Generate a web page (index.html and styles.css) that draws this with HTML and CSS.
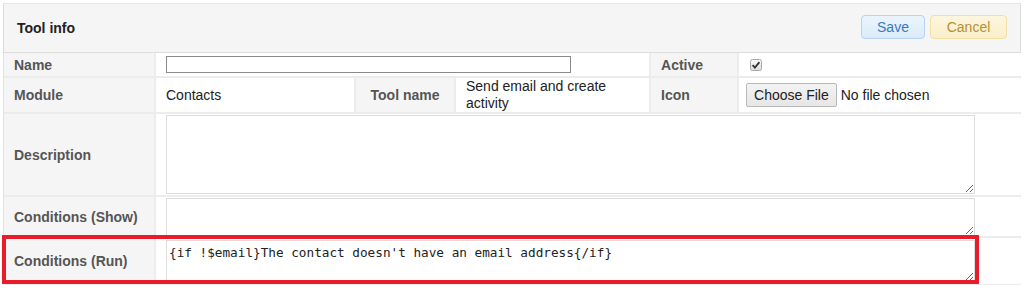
FILE: index.html
```html
<!DOCTYPE html>
<html>
<head>
<meta charset="utf-8">
<link rel="stylesheet" href="styles.css">
</head>
<body>
<div class="panel">
  <div class="panel-head">
    <div class="title">Tool info</div>
    <div class="actions">
      <button class="btn btn-save">Save</button>
      <button class="btn btn-cancel">Cancel</button>
    </div>
  </div>
  <table class="form">
    <colgroup>
      <col class="c1"><col class="c2"><col class="c3"><col class="c4"><col class="c5"><col class="c6">
    </colgroup>
    <tr class="r-name">
      <td class="lbl">Name</td>
      <td class="val" colspan="3"><input class="name-input" type="text"></td>
      <td class="lbl">Active</td>
      <td class="val">
        <svg class="chk" width="12" height="12" viewBox="0 0 12 12">
          <defs><linearGradient id="g" x1="0" y1="0" x2="0" y2="1"><stop offset="0" stop-color="#fbfbfb"/><stop offset="1" stop-color="#dcdcdc"/></linearGradient></defs>
          <rect x="0.5" y="0.5" width="11" height="11" rx="2" fill="url(#g)" stroke="#a8a8a8"/>
          <path d="M2.6 6.2 L4.9 8.6 L9.4 3.2" fill="none" stroke="#333" stroke-width="1.8"/>
        </svg>
      </td>
    </tr>
    <tr class="r-module">
      <td class="lbl">Module</td>
      <td class="val">Contacts</td>
      <td class="lbl lbl-c">Tool name</td>
      <td class="val val-wrap">Send email and create activity</td>
      <td class="lbl">Icon</td>
      <td class="val"><span class="file-btn">Choose File</span><span class="file-txt">No file chosen</span></td>
    </tr>
    <tr class="r-desc">
      <td class="lbl">Description</td>
      <td class="val ta-cell" colspan="5"><textarea class="ta ta-desc"></textarea></td>
    </tr>
    <tr class="r-show">
      <td class="lbl">Conditions (Show)</td>
      <td class="val ta-cell" colspan="5"><textarea class="ta ta-show"></textarea></td>
    </tr>
    <tr class="r-run">
      <td class="lbl">Conditions (Run)</td>
      <td class="val ta-cell" colspan="5"><textarea class="ta ta-run">{if !$email}The contact doesn't have an email address{/if}</textarea></td>
    </tr>
  </table>
  <div class="highlight"></div>
</div>
</body>
</html>
```

FILE: styles.css
```css
* { box-sizing: border-box; }
html, body { margin: 0; padding: 0; background: #fff; }
body {
  padding: 3px 0 0 3px;
  font-family: "Liberation Sans", Arial, sans-serif;
  font-size: 14px;
  color: #333;
  overflow: hidden;
}
.panel {
  position: relative;
  width: 1018px;
  border-left: 1px solid #e2e2e2;
  border-right: 1px solid #e2e2e2;
}
.panel-head {
  height: 50px;
  background: #f5f5f5;
  border-top: 1px solid #e6e6e6;
  border-bottom: 1px solid #dedede;
  box-shadow: 0 1px 2px rgba(0,0,0,0.08);
  display: flex;
  align-items: center;
  justify-content: space-between;
  padding: 0 13px 0 13px;
}
.title {
  font-weight: bold;
  font-size: 14px;
  color: #222;
  margin-top: -1px;
}
.actions {
  display: flex;
  gap: 5px;
  margin-top: -2px;
}
.btn {
  font-family: "Liberation Sans", Arial, sans-serif;
  font-size: 14px;
  height: 24px;
  border-radius: 4px;
  padding: 0;
  line-height: 20px;
}
.btn-save {
  width: 64px;
  background: linear-gradient(#eaf4fd, #dcebf9);
  border: 1px solid #b5d4f1;
  color: #3a79c0;
}
.btn-cancel {
  width: 77px;
  background: linear-gradient(#fdf6de, #fbefca);
  border: 1px solid #f1e0a6;
  color: #b78f33;
}
.form {
  width: 1017px;
  table-layout: fixed;
  border-collapse: separate;
  border-spacing: 0;
}
.c1 { width: 152px; }
.c2 { width: 200px; }
.c3 { width: 100px; }
.c4 { width: 195px; }
.c5 { width: 88px; }
.c6 { width: 282px; }
.form td {
  border-right: 2px solid #ececec;
  border-bottom: 2px solid #ececec;
  padding: 0 10px;
  vertical-align: middle;
}
.form td:last-child { border-right: none; }
.lbl {
  background: #f5f5f5;
  font-weight: bold;
  color: #555;
}
.lbl-c { text-align: center; }
.val { color: #222; background: #fff; }
.val-wrap { line-height: 17px; }
.r-name td { height: 25px; }
.r-module td { height: 35px; }
.r-desc td { height: 83px; }
.r-show td { height: 41px; }
.r-run td { height: 48px; }
.name-input {
  display: block;
  width: 405px;
  height: 17px;
  border: 1px solid #8a8a8a;
  padding: 0;
  margin: 0;
  background: #fff;
}
.chk { display: block; margin-left: 1px; }
.file-btn {
  display: inline-block;
  height: 24px;
  line-height: 22px;
  padding: 0 7px;
  background: linear-gradient(#f3f3f3, #e6e6e6);
  border: 1px solid #b9b9b9;
  border-radius: 2px;
  color: #222;
  margin-left: -3px;
}
.file-txt { margin-left: 4px; color: #222; }
.ta-cell { padding-top: 2px; padding-bottom: 2px; }
.ta {
  display: block;
  width: 809px;
  margin: 0;
  border: 1px solid #dcdcdc;
  resize: vertical;
  font-family: "DejaVu Sans Mono", monospace;
  font-size: 12.7px;
  color: #222;
  padding: 4px 2px;
  background: #fff;
}
.ta-desc { height: 79px; }
.ta-show { height: 38px; }
.ta-run { height: 42px; }
.highlight {
  position: absolute;
  left: -2px;
  top: 232px;
  width: 977px;
  height: 49px;
  border: 4px solid #ea1c2a;
  pointer-events: none;
}
```
